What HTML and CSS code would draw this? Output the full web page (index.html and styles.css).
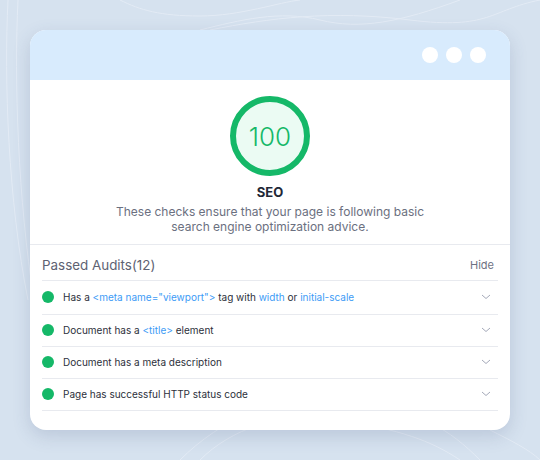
FILE: index.html
```html
<!DOCTYPE html>
<html lang="en">
<head>
    <meta charset="UTF-8">
    <meta name="viewport" content="width=device-width, initial-scale=1.0">
    <title>SEO Audit</title>
    <link rel="stylesheet" href="styles.css">
</head>
<body>
    <div class="window">
        <!-- Window bar -->
        <div class="window-bar">
            <span class="dot"></span>
            <span class="dot"></span>
            <span class="dot"></span>
        </div>

        <!-- Score -->
        <div class="score">
            <div class="gauge">100</div>
            <h2>SEO</h2>
            <p>These checks ensure that your page is following basic<br>search engine optimization advice.</p>
        </div>

        <!-- Passed audits -->
        <div class="audits">
            <div class="audits-head">
                <h3>Passed Audits(12)</h3>
                <span class="hide">Hide</span>
            </div>
            <ul class="audit-list">
                <li class="audit">
                    <span class="pass"></span>
                    <span class="label">Has a <code>&lt;meta name="viewport"&gt;</code> tag with <code>width</code> or <code>initial-scale</code></span>
                    <svg class="chevron" viewBox="0 0 10 6"><path d="M1 1l4 3.5L9 1"/></svg>
                </li>
                <li class="audit">
                    <span class="pass"></span>
                    <span class="label">Document has a <code>&lt;title&gt;</code> element</span>
                    <svg class="chevron" viewBox="0 0 10 6"><path d="M1 1l4 3.5L9 1"/></svg>
                </li>
                <li class="audit">
                    <span class="pass"></span>
                    <span class="label">Document has a meta description</span>
                    <svg class="chevron" viewBox="0 0 10 6"><path d="M1 1l4 3.5L9 1"/></svg>
                </li>
                <li class="audit">
                    <span class="pass"></span>
                    <span class="label">Page has successful HTTP status code</span>
                    <svg class="chevron" viewBox="0 0 10 6"><path d="M1 1l4 3.5L9 1"/></svg>
                </li>
            </ul>
        </div>
    </div>
</body>
</html>
```

FILE: styles.css
```css
body {
    font-family: Inter, "Noto Sans", sans-serif;
    margin: 0;
    padding: 30px;
    min-height: 460px;
    box-sizing: border-box;
    background-color: #d6e2ef;
    background-image: url("data:image/svg+xml,%3Csvg xmlns='http://www.w3.org/2000/svg' width='540' height='460' fill='none' stroke='%23e3ebf5' stroke-width='1'%3E%3Cpath d='M120 0c20 10 40 16 80 16s80-14 100-16'/%3E%3Cpath d='M200 30c40-10 80-20 120-10s80 2 140-20'/%3E%3Cpath d='M210 30c60-12 120-20 200-10s80-10 130-20'/%3E%3Cpath d='M8 0c-4 80 0 200 20 300'/%3E%3Cpath d='M18 0c-4 80 0 200 16 300'/%3E%3Cpath d='M200 460c30-30 80-50 140-40s90 20 120 40'/%3E%3Cpath d='M180 460c40-40 100-70 170-60s100 30 130 60'/%3E%3Cpath d='M490 430c20 10 40 20 50 30'/%3E%3C/svg%3E");
}
.window {
    width: 480px;
    background: white;
    border-radius: 16px;
    overflow: hidden;
    box-shadow: 0 6px 18px rgba(60,80,120,0.18);
    padding-bottom: 19px;
}
.window-bar {
    height: 50px;
    background: #d8ebfd;
    display: flex;
    justify-content: flex-end;
    align-items: center;
    gap: 8px;
    padding-right: 24px;
}
.dot {
    width: 16px;
    height: 16px;
    border-radius: 50%;
    background: white;
}
.score {
    display: flex;
    flex-direction: column;
    align-items: center;
    padding: 16px 0 10px;
    border-bottom: 1px solid #e8eaef;
}
.gauge {
    width: 80px;
    height: 80px;
    box-sizing: border-box;
    border: 6px solid #15b868;
    border-radius: 50%;
    background: #ebfbf3;
    color: #15b868;
    font-size: 26px;
    font-weight: 300;
    display: flex;
    align-items: center;
    justify-content: center;
}
.score h2 {
    margin: 8px 0 0;
    font-size: 13px;
    line-height: 16px;
    font-weight: 700;
    color: #222736;
}
.score p {
    margin: 4px 0 0;
    font-size: 12px;
    line-height: 15px;
    color: #6b7080;
    text-align: center;
}
.audits {
    padding: 0 12px;
}
.audits-head {
    display: flex;
    justify-content: space-between;
    align-items: center;
    height: 30px;
    padding-top: 5px;
    border-bottom: 1px solid #e8eaef;
}
.audits-head h3 {
    margin: 0;
    font-size: 13.4px;
    font-weight: 400;
    color: #5e6272;
}
.hide {
    font-size: 11px;
    color: #6e7282;
    padding-right: 4px;
}
.audit-list {
    list-style: none;
    margin: 0;
    padding: 0;
}
.audit {
    display: flex;
    align-items: center;
    height: 31px;
    padding-bottom: 1px;
    box-sizing: border-box;
    height: 32px;
    border-bottom: 1px solid #e8eaef;
    font-size: 10px;
    color: #2c303b;
}
.audit:first-child {
    height: 34px;
}
.pass {
    width: 12px;
    height: 12px;
    border-radius: 50%;
    background: #15b868;
    margin-right: 9px;
}
.label {
    flex: 1;
}
.label code {
    font-family: inherit;
    color: #3d9bf6;
}
.chevron {
    width: 10px;
    height: 6px;
    margin-right: 7px;
    fill: none;
    stroke: #a4a9b8;
    stroke-width: 1;
}
```
